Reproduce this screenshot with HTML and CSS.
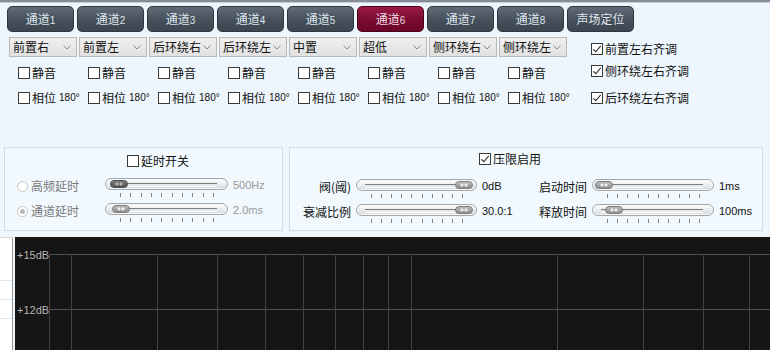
FILE: index.html
```html
<!DOCTYPE html>
<html lang="zh">
<head>
<meta charset="utf-8">
<title>通道设置</title>
<link rel="stylesheet" href="styles.css">
</head>
<body>
<div class="topbar"></div>

<nav class="tabs">
  <button class="tab">通道<small>1</small></button>
  <button class="tab">通道<small>2</small></button>
  <button class="tab">通道<small>3</small></button>
  <button class="tab">通道<small>4</small></button>
  <button class="tab">通道<small>5</small></button>
  <button class="tab active">通道<small>6</small></button>
  <button class="tab">通道<small>7</small></button>
  <button class="tab">通道<small>8</small></button>
  <button class="tab">声场定位</button>
</nav>

<div class="controls">
  <div class="channels">
    <div class="select"><span>前置右</span><svg class="chev" width="8" height="5" viewBox="0 0 8 5"><path d="M0.5 0.5 L4 4 L7.5 0.5" fill="none" stroke="#888" stroke-width="1"/></svg></div>
    <div class="select"><span>前置左</span><svg class="chev" width="8" height="5" viewBox="0 0 8 5"><path d="M0.5 0.5 L4 4 L7.5 0.5" fill="none" stroke="#888" stroke-width="1"/></svg></div>
    <div class="select"><span>后环绕右</span><svg class="chev" width="8" height="5" viewBox="0 0 8 5"><path d="M0.5 0.5 L4 4 L7.5 0.5" fill="none" stroke="#888" stroke-width="1"/></svg></div>
    <div class="select"><span>后环绕左</span><svg class="chev" width="8" height="5" viewBox="0 0 8 5"><path d="M0.5 0.5 L4 4 L7.5 0.5" fill="none" stroke="#888" stroke-width="1"/></svg></div>
    <div class="select"><span>中置</span><svg class="chev" width="8" height="5" viewBox="0 0 8 5"><path d="M0.5 0.5 L4 4 L7.5 0.5" fill="none" stroke="#888" stroke-width="1"/></svg></div>
    <div class="select"><span>超低</span><svg class="chev" width="8" height="5" viewBox="0 0 8 5"><path d="M0.5 0.5 L4 4 L7.5 0.5" fill="none" stroke="#888" stroke-width="1"/></svg></div>
    <div class="select"><span>侧环绕右</span><svg class="chev" width="8" height="5" viewBox="0 0 8 5"><path d="M0.5 0.5 L4 4 L7.5 0.5" fill="none" stroke="#888" stroke-width="1"/></svg></div>
    <div class="select"><span>侧环绕左</span><svg class="chev" width="8" height="5" viewBox="0 0 8 5"><path d="M0.5 0.5 L4 4 L7.5 0.5" fill="none" stroke="#888" stroke-width="1"/></svg></div>

    <label class="check cell"><span class="cb"></span>静音</label>
    <label class="check cell"><span class="cb"></span>静音</label>
    <label class="check cell"><span class="cb"></span>静音</label>
    <label class="check cell"><span class="cb"></span>静音</label>
    <label class="check cell"><span class="cb"></span>静音</label>
    <label class="check cell"><span class="cb"></span>静音</label>
    <label class="check cell"><span class="cb"></span>静音</label>
    <label class="check cell"><span class="cb"></span>静音</label>

    <label class="check cell"><span class="cb"></span>相位<span class="deg">180°</span></label>
    <label class="check cell"><span class="cb"></span>相位<span class="deg">180°</span></label>
    <label class="check cell"><span class="cb"></span>相位<span class="deg">180°</span></label>
    <label class="check cell"><span class="cb"></span>相位<span class="deg">180°</span></label>
    <label class="check cell"><span class="cb"></span>相位<span class="deg">180°</span></label>
    <label class="check cell"><span class="cb"></span>相位<span class="deg">180°</span></label>
    <label class="check cell"><span class="cb"></span>相位<span class="deg">180°</span></label>
    <label class="check cell"><span class="cb"></span>相位<span class="deg">180°</span></label>
  </div>

  <div class="sync">
    <label class="check"><span class="cb on"></span>前置左右齐调</label>
    <label class="check"><span class="cb on"></span>侧环绕左右齐调</label>
    <label class="check"><span class="cb on"></span>后环绕左右齐调</label>
  </div>
</div>

<div class="panels">
  <section class="panel delay">
    <div class="title"><label class="check"><span class="cb"></span>延时开关</label></div>
    <div class="rows">
      <div class="lbl dim"><span class="radio"></span>高频延时</div>
      <div class="slider">
        <div class="track"><span class="thumb dark" style="left:4px"></span></div>
        <div class="ticks"><i></i><i></i><i></i><i></i><i></i><i></i><i></i><i></i><i></i><i></i></div>
      </div>
      <div class="val dim">500Hz</div>

      <div class="lbl dim"><span class="radio on"></span>通道延时</div>
      <div class="slider">
        <div class="track"><span class="thumb" style="left:6px"></span></div>
        <div class="ticks"><i></i><i></i><i></i><i></i><i></i><i></i><i></i><i></i><i></i><i></i></div>
      </div>
      <div class="val dim">2.0ms</div>
    </div>
  </section>

  <section class="panel limiter">
    <div class="title"><label class="check"><span class="cb on"></span>压限启用</label></div>
    <div class="rows">
      <div class="lbl right">阀(阈)</div>
      <div class="slider">
        <div class="track"><span class="thumb" style="left:98px"></span></div>
        <div class="ticks"><i></i><i></i><i></i><i></i><i></i><i></i><i></i><i></i><i></i><i></i></div>
      </div>
      <div class="val">0dB</div>
      <div class="lbl right">启动时间</div>
      <div class="slider">
        <div class="track"><span class="thumb" style="left:2px"></span></div>
        <div class="ticks"><i></i><i></i><i></i><i></i><i></i><i></i><i></i><i></i><i></i><i></i></div>
      </div>
      <div class="val">1ms</div>

      <div class="lbl right">衰减比例</div>
      <div class="slider">
        <div class="track"><span class="thumb" style="left:98px"></span></div>
        <div class="ticks"><i></i><i></i><i></i><i></i><i></i><i></i><i></i><i></i><i></i><i></i></div>
      </div>
      <div class="val">30.0:1</div>
      <div class="lbl right">释放时间</div>
      <div class="slider">
        <div class="track"><span class="thumb" style="left:12px"></span></div>
        <div class="ticks"><i></i><i></i><i></i><i></i><i></i><i></i><i></i><i></i><i></i><i></i></div>
      </div>
      <div class="val">100ms</div>
    </div>
  </section>
</div>

<div class="bottom">
  <div class="side"><i></i><i></i><i></i></div>
  <svg class="chart" width="755" height="120" viewBox="0 0 755 120">
    <rect x="0" y="0" width="755" height="120" fill="#151515"/>
    <g stroke="#505050" stroke-width="1">
      <line x1="34" y1="17.5" x2="755" y2="17.5"/>
      <line x1="34" y1="72.5" x2="755" y2="72.5"/>
    </g>
    <g stroke="#444" stroke-width="1">
      <line x1="34.5" y1="17" x2="34.5" y2="120"/>
      <line x1="56.5" y1="17" x2="56.5" y2="120"/>
      <line x1="142.5" y1="17" x2="142.5" y2="120"/>
      <line x1="202.5" y1="17" x2="202.5" y2="120"/>
      <line x1="250.5" y1="17" x2="250.5" y2="120"/>
      <line x1="288.5" y1="17" x2="288.5" y2="120"/>
      <line x1="320.5" y1="17" x2="320.5" y2="120"/>
      <line x1="348.5" y1="17" x2="348.5" y2="120"/>
      <line x1="373.5" y1="17" x2="373.5" y2="120"/>
      <line x1="396.5" y1="17" x2="396.5" y2="120"/>
      <line x1="542.5" y1="17" x2="542.5" y2="120"/>
      <line x1="628.5" y1="17" x2="628.5" y2="120"/>
      <line x1="688.5" y1="17" x2="688.5" y2="120"/>
      <line x1="734.5" y1="17" x2="734.5" y2="120"/>
    </g>
    <g class="axis">
      <text x="2" y="21.5">+15dB</text>
      <text x="2" y="76.5">+12dB</text>
    </g>
  </svg>
</div>
</body>
</html>
```

FILE: styles.css
```css
* { box-sizing: border-box; }

html, body {
  margin: 0;
  padding: 0;
}

body {
  width: 770px;
  height: 350px;
  overflow: hidden;
  background: #eef6fd;
  font-family: "Noto Sans CJK SC", "Noto Sans", sans-serif;
  font-size: 12px;
  color: #111;
  line-height: 16px;
}

.topbar {
  height: 3px;
  background: #868b96;
  border-bottom: 1px solid #c9cdd6;
}

/* tabs */
.tabs {
  display: flex;
  gap: 3px;
  padding-left: 7px;
  margin-top: 3px;
  height: 26px;
}

.tab {
  width: 67px;
  height: 26px;
  border: 1px solid #2f3740;
  border-radius: 5px;
  background: linear-gradient(#616b77, #46505b 55%, #3c4550);
  color: #dfe6ee;
  font-family: "Noto Sans CJK SC", sans-serif;
  font-size: 12px;
  padding: 0;
  line-height: 24px;
}

.tab small {
  font-family: "Liberation Sans", sans-serif;
  font-size: 10px;
}

.tab.active {
  background: linear-gradient(#9a1a45, #7a0a32 55%, #6a052a);
  border-color: #4a0018;
  color: #f2dbe3;
}

/* channel controls */
.controls {
  display: flex;
  margin-top: 5px;
  height: 70px;
}

.channels {
  display: grid;
  grid-template-columns: repeat(8, 68px);
  grid-template-rows: 20px 32px 18px;
  column-gap: 2px;
  padding-left: 9px;
}

.select {
  display: flex;
  align-items: center;
  justify-content: space-between;
  height: 20px;
  border: 1px solid #b9b9b9;
  background: linear-gradient(#efefef, #e1e1e1);
  padding: 0 5px 0 3px;
  white-space: nowrap;
}

.select span {
  line-height: 18px;
}

.chev {
  flex: none;
}

.check {
  display: flex;
  align-items: center;
  gap: 2px;
  height: 16px;
  white-space: nowrap;
}

.cell {
  padding-left: 9px;
  align-self: center;
}

.deg {
  font-family: "Liberation Sans", sans-serif;
  font-size: 10px;
  margin-left: 1px;
}

.cb {
  position: relative;
  flex: none;
  width: 12px;
  height: 12px;
  border: 1px solid #3a3a3a;
  background: #fff;
}

.cb.on::after {
  content: "";
  position: absolute;
  left: 3px;
  top: 0px;
  width: 3px;
  height: 7px;
  border-right: 1.5px solid #222;
  border-bottom: 1.5px solid #222;
  transform: rotate(40deg);
}

.sync {
  display: grid;
  grid-template-rows: 22px 27px 16px;
  padding-top: 4px;
  margin-left: 24px;
}

.sync .check {
  align-self: start;
}

/* panels */
.panels {
  display: flex;
  gap: 6px;
  padding-left: 4px;
  margin-top: 40px;
  height: 84px;
}

.panel {
  border: 1px solid #d3dbe3;
  background: #f1f8fe;
}

.delay {
  width: 279px;
  padding-top: 5px;
}

.limiter {
  width: 474px;
  padding-top: 3px;
}

.title {
  height: 16px;
  display: flex;
}

.delay .title { padding-left: 122px; }
.limiter .title { padding-left: 189px; }

.rows {
  display: grid;
  align-items: start;
}

.delay .rows {
  margin-top: 9px;
  padding-left: 12px;
  grid-template-columns: 88px 123px auto;
  grid-auto-rows: 25px;
}

.limiter .rows {
  margin-top: 12px;
  grid-template-columns: 61px 121px 54px 46px 122px auto;
  column-gap: 5px;
  grid-auto-rows: 25px;
}

.lbl {
  display: flex;
  align-items: center;
  gap: 3px;
  height: 16px;
  margin-top: 0px;
  white-space: nowrap;
}

.lbl.right {
  justify-content: flex-end;
}

.dim { color: #7a7a7a; }

.radio {
  width: 11px;
  height: 11px;
  border-radius: 50%;
  border: 1px solid #c4c4c4;
  background: #fff;
  position: relative;
}

.radio.on::after {
  content: "";
  position: absolute;
  left: 2px;
  top: 2px;
  width: 5px;
  height: 5px;
  border-radius: 50%;
  background: #b8b8b8;
}

.val {
  font-family: "Liberation Sans", sans-serif;
  font-size: 11px;
  line-height: 14px;
  margin-top: 0px;
}

.delay .val { margin-left: 5px; }
.val.dim { color: #9a9a9a; }

/* slider */
.slider {
  width: 100%;
}

.track {
  position: relative;
  height: 12px;
  border: 1px solid #a3a8ad;
  border-radius: 6px;
  background: linear-gradient(#ffffff, #e6e8ea 60%, #d4d7da);
  box-shadow: inset 0 0 0 1px #f8f8f8;
}

.track::before {
  content: "";
  position: absolute;
  left: 8px;
  right: 10px;
  top: 4px;
  height: 2px;
  border-top: 1px solid #7c7c7c;
  border-bottom: 1px solid #ffffff;
}

.thumb {
  position: absolute;
  top: 1px;
  width: 18px;
  height: 8px;
  border-radius: 4px;
  border: 1px solid #7d7d7d;
  background:
    radial-gradient(circle at 6px 3px, #f0f0f0 1.3px, transparent 1.8px),
    radial-gradient(circle at 10px 3px, #f0f0f0 1.3px, transparent 1.8px),
    linear-gradient(#bdbdbd, #8f8f8f);
}

.thumb.dark {
  border-color: #4a4a4a;
  background:
    radial-gradient(circle at 6px 3px, #b5b5b5 1.3px, transparent 1.8px),
    radial-gradient(circle at 10px 3px, #b5b5b5 1.3px, transparent 1.8px),
    linear-gradient(#7d7d7d, #555);
}

.ticks {
  display: flex;
  justify-content: space-between;
  margin: 3px 14px 0 15px;
  height: 4px;
}

.ticks i {
  width: 1px;
  height: 4px;
  background: #808080;
}

/* chart */
.bottom {
  display: flex;
  gap: 2px;
  margin-top: 6px;
}

.side {
  width: 13px;
  height: 120px;
  background: #fff;
  border-right: 1px solid #9a9a9a;
  border-top: 1px solid #d5d9de;
  padding-top: 42px;
  display: flex;
  flex-direction: column;
  gap: 18px;
}

.side i {
  display: block;
  height: 1px;
  background: #e3e6ea;
}

.chart {
  display: block;
  flex: none;
}

.axis text {
  font-family: "Liberation Sans", sans-serif;
  font-size: 11px;
  fill: #b4b4b4;
}
```
